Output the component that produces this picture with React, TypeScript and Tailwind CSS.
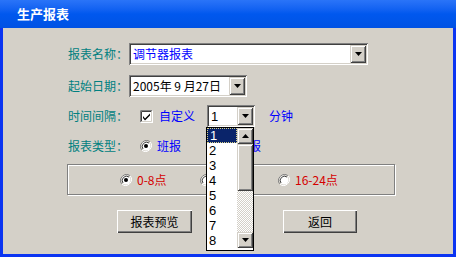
import { ReactNode } from 'react';

const cjk = { fontFamily: '"Noto Sans CJK SC", "Liberation Sans", sans-serif' };
const latin = { fontFamily: '"Liberation Sans", "Noto Sans CJK SC", sans-serif' };

const sunken =
  'shadow-[inset_1px_1px_0_#808080,inset_-1px_-1px_0_#ffffff,inset_2px_2px_0_#404040,inset_-2px_-2px_0_#d4d0c8]';
const raised =
  'shadow-[inset_1px_1px_0_#d4d0c8,inset_-1px_-1px_0_#404040,inset_2px_2px_0_#ffffff,inset_-2px_-2px_0_#808080]';
const button =
  'shadow-[inset_1px_1px_0_#ffffff,inset_-1px_-1px_0_#404040,inset_-2px_-2px_0_#808080]';

function Arrow({ up = false }: { up?: boolean }) {
  return (
    <svg width="7" height="4" viewBox="0 0 7 4">
      <path d={up ? 'M3.5 0 L7 4 L0 4 Z' : 'M0 0 L7 0 L3.5 4 Z'} fill="#000" />
    </svg>
  );
}

function DropBtn() {
  return (
    <div className={`w-[16px] h-[18px] shrink-0 bg-[#d4d0c8] flex items-center justify-center ${raised}`}>
      <Arrow />
    </div>
  );
}

function Combo({ width, children }: { width: string; children: ReactNode }) {
  return (
    <div className={`${width} h-[22px] bg-white flex items-center p-[2px] ${sunken}`}>
      <div className="flex-1 pl-[2px] text-[12px] leading-[16px] whitespace-nowrap">{children}</div>
      <DropBtn />
    </div>
  );
}

function Radio({ checked = false }: { checked?: boolean }) {
  return (
    <svg width="12" height="12" viewBox="0 0 12 12" className="shrink-0">
      <path d="M10.2 1.8 A6 6 0 0 0 1.8 10.2" stroke="#808080" strokeWidth="1" fill="none" />
      <path d="M1.8 10.2 A6 6 0 0 0 10.2 1.8" stroke="#ffffff" strokeWidth="1" fill="none" />
      <circle cx="6" cy="6" r="4.5" fill="#fff" />
      <path d="M9 3 A4.3 4.3 0 0 0 3 9" stroke="#404040" strokeWidth="1" fill="none" />
      {checked && <circle cx="6" cy="6" r="2" fill="#000" />}
    </svg>
  );
}

function Label({ children }: { children: ReactNode }) {
  return <span className="w-[61px] shrink-0 text-[12px] text-[#008080] whitespace-nowrap">{children}</span>;
}

export default function App() {
  const items = ['1', '2', '3', '4', '5', '6', '7', '8'];
  return (
    <div className="relative w-[456px] h-[257px] flex flex-col bg-[#d4d0c8] overflow-hidden" style={cjk}>
      <div className="h-[28px] shrink-0 bg-gradient-to-b from-[#2a74f8] via-[#0058ee] to-[#0052e4] flex items-center pl-[17px]">
        <span className="text-white font-bold text-[13px]">生产报表</span>
      </div>
      <div className="flex-1 flex flex-col border-l-[3px] border-r-[3px] border-b-[3px] border-[#0a34f2]">
        <div className="mt-[15px] pl-[65px] h-[22px] flex items-center">
          <Label>报表名称：</Label>
          <Combo width="w-[239px]">
            <span className="text-[#0000ff]">调节器报表</span>
          </Combo>
        </div>
        <div className="mt-[10px] pl-[65px] h-[22px] flex items-center">
          <Label>起始日期：</Label>
          <Combo width="w-[118px]">
            <span className="text-black">2005年 9 月27日</span>
          </Combo>
        </div>
        <div className="mt-[8px] pl-[65px] h-[22px] flex items-center">
          <Label>时间间隔：</Label>
          <svg width="13" height="13" viewBox="0 0 13 13" className="ml-[11px] shrink-0">
            <rect x="0" y="0" width="13" height="13" fill="#fff" />
            <path d="M0.5 12.5 V0.5 H12.5" stroke="#808080" fill="none" />
            <path d="M1.5 11.5 V1.5 H11.5" stroke="#404040" fill="none" />
            <path d="M0.5 12.5 H12.5 V0.5" stroke="#ffffff" fill="none" />
            <path d="M1.5 11.5 H11.5 V1.5" stroke="#d4d0c8" fill="none" />
            <path d="M3 6 L5 8.5 L10 3.5 L10 5.5 L5 10.5 L3 8 Z" fill="#000" />
          </svg>
          <span className="ml-[6px] w-[48px] text-[12px] text-[#0000ff]">自定义</span>
          <Combo width="w-[48px]">
            <span className="text-black text-[13px]" style={latin}>1</span>
          </Combo>
          <span className="ml-[14px] text-[12px] text-[#0000ff]">分钟</span>
        </div>
        <div className="mt-[8px] pl-[65px] h-[22px] flex items-center">
          <Label>报表类型：</Label>
          <span className="ml-[11px]"><Radio checked /></span>
          <span className="ml-[5px] w-[63px] text-[12px] text-[#0000ff]">班报</span>
          <Radio />
          <span className="ml-[5px] text-[12px] text-[#0000ff]">日报</span>
        </div>
        <div className="mt-[7px] ml-[64px] w-[328px] h-[31px] border border-[#808080] shadow-[inset_1px_1px_0_#ffffff,1px_1px_0_#ffffff] flex items-center pl-[52px]">
          <div className="w-[80px] flex items-center">
            <Radio checked />
            <span className="ml-[5px] text-[12px] text-[#d40000]">0-8点</span>
          </div>
          <div className="w-[78px] flex items-center">
            <Radio />
            <span className="ml-[5px] text-[12px] text-[#d40000]">8-16点</span>
          </div>
          <div className="flex items-center">
            <Radio />
            <span className="ml-[5px] text-[12px] text-[#d40000]">16-24点</span>
          </div>
        </div>
        <div className="mt-[15px] pl-[114px] flex">
          <div className={`w-[75px] h-[23px] flex items-center justify-center text-[12px] text-black ${button}`}>报表预览</div>
          <div className={`ml-[91px] w-[74px] h-[23px] flex items-center justify-center text-[12px] text-black ${button}`}>返回</div>
        </div>
      </div>

      <div className="absolute left-[206px] top-[127px] w-[48px] h-[124px] bg-white border border-black flex" style={latin}>
        <div className="flex-1 flex flex-col">
          {items.map((n, i) => (
            <div
              key={n}
              className={`h-[15px] flex items-center pl-[2px] text-[13px] leading-none ${
                i === 0 ? 'bg-[#0a246a] text-white border border-dotted border-[#d8d088]' : 'text-black'
              }`}
            >
              {n}
            </div>
          ))}
        </div>
        <div className="w-[16px] flex flex-col">
          <div className={`h-[16px] bg-[#d4d0c8] flex items-center justify-center ${raised}`}>
            <Arrow up />
          </div>
          <div className={`h-[47px] bg-[#d4d0c8] ${raised}`} />
          <div className="flex-1 bg-[repeating-conic-gradient(#d4d0c8_0_25%,#ffffff_0_50%)] bg-[length:2px_2px]" />
          <div className={`h-[16px] bg-[#d4d0c8] flex items-center justify-center ${raised}`}>
            <Arrow />
          </div>
          <div className="h-[2px]" />
        </div>
      </div>
    </div>
  );
}
